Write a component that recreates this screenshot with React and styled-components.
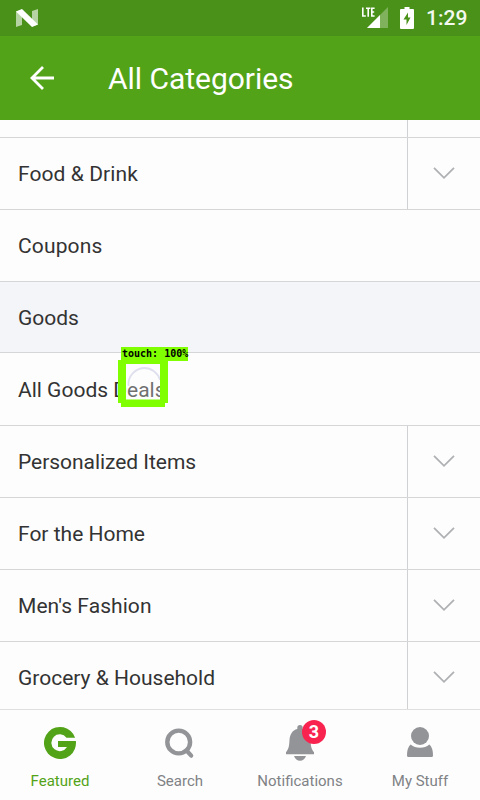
import React from "react";
import styled, { createGlobalStyle } from "styled-components";

const GlobalStyle = createGlobalStyle`
  * { box-sizing: border-box; }
  body { margin: 0; background: #fdfdfd; font-family: Roboto, sans-serif; }
  svg { display: block; flex: none; }
`;

const Screen = styled.div`
  position: relative;
  display: flex;
  flex-direction: column;
  width: 480px;
  height: 800px;
  overflow: hidden;
  background: #fdfdfd;
`;

const StatusBar = styled.div`
  display: flex;
  align-items: center;
  height: 36px;
  flex: none;
  padding: 0 12px 0 15px;
  background: #4a9119;
  color: #fff;
`;

const StatusIcons = styled.div`
  display: flex;
  align-items: center;
  gap: 12px;
  margin-left: auto;
`;

const Clock = styled.span`
  width: 42px;
  font-size: 21px;
  line-height: 38px;
  font-weight: 500;
  white-space: nowrap;
  color: #f4f9f0;
`;

const Header = styled.header`
  display: flex;
  align-items: center;
  height: 84px;
  flex: none;
  padding: 0 30px;
  background: #53a318;
  color: #fff;
`;

const Title = styled.h1`
  margin: 0 0 0 53px;
  font-size: 30px;
  line-height: 36px;
  font-weight: 400;
  padding-top: 2px;
  letter-spacing: -0.03px;
`;

const List = styled.main`
  display: flex;
  flex-direction: column;
  height: 589px;
  flex: none;
  overflow: hidden;
`;

const Row = styled.div`
  display: flex;
  height: ${(p) => p.$height || 72}px;
  flex: none;
  border-bottom: 1px solid #d5d6d8;
  background: ${(p) => (p.$shaded ? "#f4f5f8" : "#fdfdfd")};
`;

const RowLabel = styled.span`
  flex: 1;
  padding-left: 18px;
  font-size: 21px;
  line-height: ${(p) => p.$line || 73}px;
  letter-spacing: ${(p) => p.$tracking || 0}px;
  color: #333;
  white-space: nowrap;
`;

const Expander = styled.div`
  display: flex;
  align-items: center;
  justify-content: center;
  width: 73px;
  padding: 0 1px 1px 0;
  border-left: 1px solid #d0d1d3;
`;

const TabBar = styled.nav`
  display: grid;
  grid-template-columns: repeat(4, 120px);
  height: 91px;
  flex: none;
  border-top: 1px solid #dfdfdf;
  background: #fdfdfd;
`;

const Tab = styled.div`
  display: flex;
  flex-direction: column;
  align-items: center;
  color: ${(p) => (p.$active ? "#53a318" : "#808285")};
`;

const TabIcon = styled.div`
  position: relative;
  width: 40px;
  height: 40px;
  margin-top: 12px;
`;

const TabLabel = styled.span`
  margin-top: 9px;
  font-size: 15px;
  line-height: 20px;
  white-space: nowrap;
`;

const Badge = styled.span`
  position: absolute;
  left: 22px;
  top: -2px;
  width: 24px;
  height: 24px;
  border-radius: 50%;
  background: #f8234f;
  color: #fff;
  font-size: 18px;
  line-height: 24px;
  font-weight: 700;
  text-align: center;
`;

const TouchMarker = styled.div`
  position: absolute;
  left: 118px;
  top: 360px;
  width: 50px;
  height: 47px;
`;

const TouchLabel = styled.div`
  position: absolute;
  left: 121px;
  top: 347px;
  width: 67px;
  height: 14px;
  padding-left: 1px;
  background: #80ff00;
  color: #000;
  font-family: "DejaVu Sans Mono", monospace;
  font-weight: 700;
  font-size: 10px;
  line-height: 13px;
  white-space: pre;
`;

const rows = [
  { label: "Food & Drink", expandable: true, tracking: 0.08 },
  { label: "Coupons", tracking: 0.15 },
  { label: "Goods", shaded: true, height: 71 },
  { label: "All Goods Deals", height: 73, line: 75 },
  { label: "Personalized Items", expandable: true, tracking: -0.04 },
  { label: "For the Home", expandable: true },
  { label: "Men's Fashion", expandable: true, tracking: 0.07 },
  { label: "Grocery & Household", expandable: true },
];

const Chevron = () => (
  <svg width="22" height="14" viewBox="0 0 22 14" fill="none">
    <path d="M1 1.800 11 11.800 21 1.800" stroke="#b0b1b3" strokeWidth="1.8" />
  </svg>
);

const SystemLogo = () => (
  <svg width="24" height="20" viewBox="0 0 24 20">
    <path d="M1 3.5 7 1.5V17L1 19ZM17 3 23 1V16.5L17 18.5Z" fill="#fff" opacity=".6" />
    <path d="M1 3.5 7 1 23 16.5 17 19Z" fill="#fff" />
  </svg>
);

const Signal = () => (
  <svg width="28" height="24" viewBox="0 0 28 24">
    <path d="M7 22 28 1V22Z" fill="#fff" opacity=".3" />
    <path d="M7 22 20 9V22Z" fill="#fff" />
    <path
      d="M2.800 1.500V10H5.800M6 2.300H10.400M8.200 2.300V10.800M14.600 2.300H11.800V10H14.600M11.800 6H14.200"
      fill="none"
      stroke="#fff"
      strokeWidth="1.6"
    />
  </svg>
);

const Battery = () => (
  <svg width="14" height="22" viewBox="0 0 14 22">
    <path d="M4.5 0h5v2H13q1 0 1 1v18q0 1-1 1H1q-1 0-1-1V3q0-1 1-1h3.5Z" fill="#fff" />
    <path d="M8 5.5 3.5 12.5H6.5V18L10.5 10.500H8Z" fill="#4a9119" />
  </svg>
);

const BackArrow = () => (
  <svg width="25" height="24" viewBox="0 0 25 24" fill="none" stroke="#fff" strokeWidth="2.8">
    <path d="M24 12H2M13 1 2 12 13 23" />
  </svg>
);

const FeaturedIcon = () => (
  <svg width="40" height="40" viewBox="0 0 40 40">
    <path
      d="M35.100 15.700H26.500A8.400 8.400 0 1 0 27 25H18V19H35.870A16 16 0 1 1 35.100 15.700Z"
      fill="#53a318"
    />
  </svg>
);

const SearchIcon = () => (
  <svg width="40" height="40" viewBox="0 0 40 40" fill="none" stroke="#929497">
    <circle cx="18.7" cy="20" r="11.4" strokeWidth="4.4" />
    <path d="m26.5 28.5 4.700 5.200" strokeWidth="4.2" strokeLinecap="round" />
  </svg>
);

const BellIcon = () => (
  <svg width="40" height="40" viewBox="0 0 40 40" fill="#929497">
    <path d="M17.3 5.700a2.7 2.7 0 0 1 5.4 0v1.3c5 1.3 7.5 5.5 7.8 11 .3 6 .8 9 3.5 12.3v2H6v-2c2.7-3.3 3.2-6.3 3.500-12.300.3-5.500 2.800-9.700 7.800-11Z" />
    <path d="M14 34h12c-1.100 3-3.300 4.700-6 4.700S15.100 37 14 34Z" />
  </svg>
);

const PersonIcon = () => (
  <svg width="40" height="40" viewBox="0 0 40 40" fill="#929497">
    <circle cx="20" cy="14" r="9" />
    <path d="M10.700 22.500q3.800 3.300 9.300 3.300t9.300-3.300Q33 25.500 33 33.500q0 1.500-1.500 1.500h-23Q7 35 7 33.500 7 25.500 10.700 22.500Z" />
  </svg>
);

export default function App() {
  return (
    <Screen>
      <GlobalStyle />
      <StatusBar>
        <SystemLogo />
        <StatusIcons>
          <Signal />
          <Battery />
          <Clock>1:29</Clock>
        </StatusIcons>
      </StatusBar>
      <Header>
        <BackArrow />
        <Title>All Categories</Title>
      </Header>
      <List>
        <Row $height={18}>
          <RowLabel />
          <Expander />
        </Row>
        {rows.map((row) => (
          <Row key={row.label} $shaded={row.shaded} $height={row.height}>
            <RowLabel $line={row.line} $tracking={row.tracking}>
              {row.label}
            </RowLabel>
            {row.expandable && (
              <Expander>
                <Chevron />
              </Expander>
            )}
          </Row>
        ))}
      </List>
      <TabBar>
        <Tab $active>
          <TabIcon><FeaturedIcon /></TabIcon>
          <TabLabel>Featured</TabLabel>
        </Tab>
        <Tab>
          <TabIcon><SearchIcon /></TabIcon>
          <TabLabel>Search</TabLabel>
        </Tab>
        <Tab>
          <TabIcon>
            <BellIcon />
            <Badge>3</Badge>
          </TabIcon>
          <TabLabel>Notifications</TabLabel>
        </Tab>
        <Tab>
          <TabIcon><PersonIcon /></TabIcon>
          <TabLabel>My Stuff</TabLabel>
        </Tab>
      </TabBar>
      <TouchMarker>
        <svg width="50" height="47" viewBox="0 0 50 47">
          <rect x="8" y="4" width="34" height="36" fill="#fff" opacity=".3" />
          <path d="M10.500 26A16.500 16.500 0 0 1 26 8 16.500 16.500 0 0 1 42 20" fill="none" stroke="#dfe0ee" strokeWidth="1.8" />
          <path
            fillRule="evenodd"
            fill="#80ff00"
            d="M0 0H50V43H47V47H3V43H0ZM8 4V39.500H42V4Z"
          />
        </svg>
      </TouchMarker>
      <TouchLabel>touch: 100%</TouchLabel>
    </Screen>
  );
}
